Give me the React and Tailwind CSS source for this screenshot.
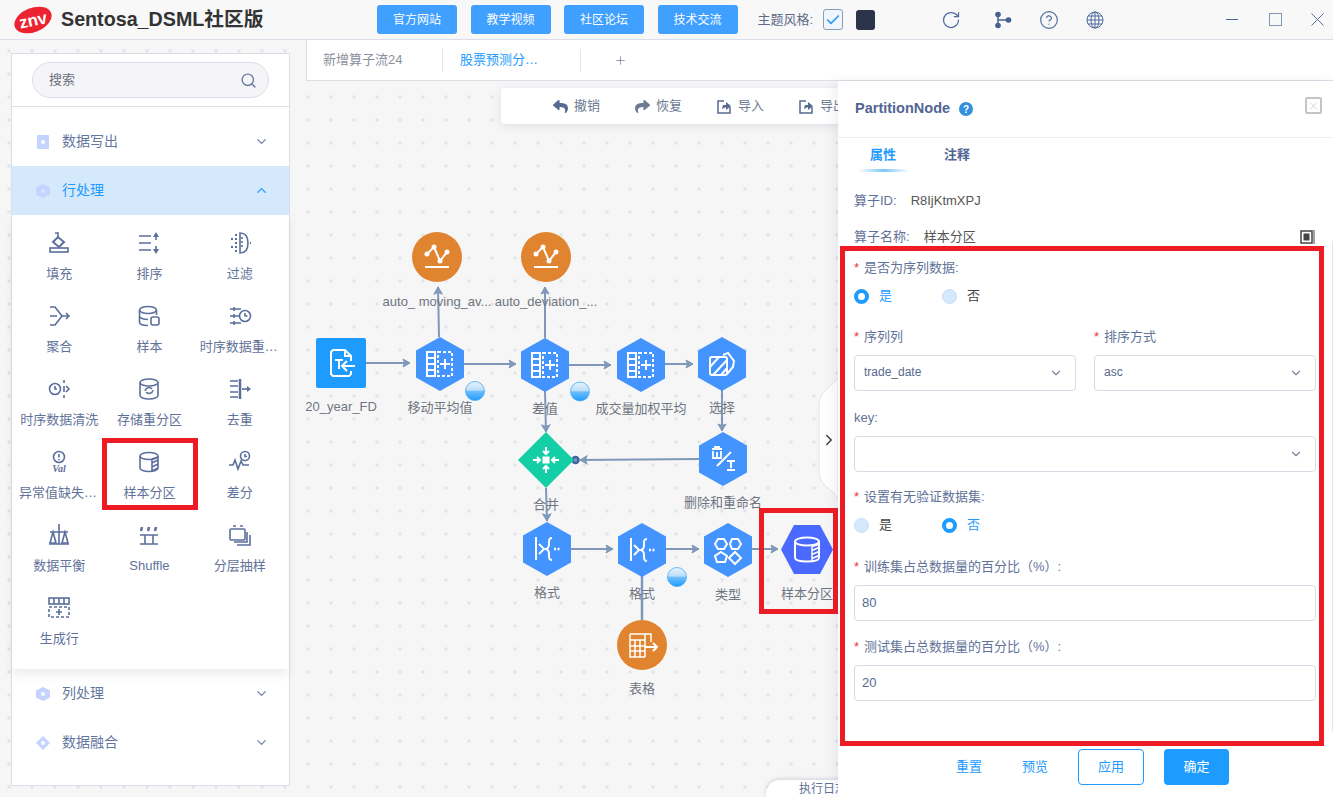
import { ChevronDown, ChevronUp, ChevronRight, Search, RotateCw, CircleHelp, Check, Plus, X } from 'lucide-react'
import { FaReply, FaShare } from 'react-icons/fa'

const stroke = { fill: 'none', stroke: 'currentColor', strokeWidth: 1.6 }

// sidebar operator icons, 24 box
const sideIcons = {
  fill: (
    <>
      <rect x="3" y="17" width="18" height="4" {...stroke} />
      <path d="M6 11l5-5 6 5-5 5z" {...stroke} strokeWidth="2" />
      <path d="M8 2h3v4" {...stroke} />
    </>
  ),
  sort: (
    <>
      <path d="M2 5h12M2 12h12M2 19h12" {...stroke} />
      <path d="M19 9V4M19 15v5" {...stroke} />
      <path d="M19 1l3 5h-6zM19 23l3-5h-6z" fill="currentColor" />
    </>
  ),
  filter: (
    <>
      <path d="M12 2c6 0 8 5 8 10s-2 10-8 10z" {...stroke} />
      <path d="M14 6v12" {...stroke} strokeDasharray="2 2" />
      <path d="M3 8h2M3 16h2M7 4h2M7 8h2M7 12h2M7 16h2M7 20h2M22 12h1" stroke="currentColor" strokeWidth="2" />
    </>
  ),
  agg: (
    <>
      <path d="M3 3h5l7 9-7 9H3M3 12h7" {...stroke} />
      <path d="M15 12h7M19 9l3 3-3 3" {...stroke} />
    </>
  ),
  sample: (
    <>
      <ellipse cx="11" cy="6" rx="8.500" ry="3.500" {...stroke} />
      <path d="M2.500 6v12c0 2 3.500 3.500 8.500 3.500M19.500 6v5M2.500 12c0 2 4 3.500 8.500 3.500" {...stroke} />
      <rect x="14" y="13" width="8" height="8" rx="2" {...stroke} />
    </>
  ),
  resample: (
    <>
      <path d="M2 5h11M2 12h9M2 19h11" {...stroke} />
      <path d="M6 3v4M6 10v4M6 17v4" {...stroke} />
      <circle cx="17" cy="12" r="5.500" {...stroke} />
      <path d="M17 9v3h2.500" {...stroke} />
    </>
  ),
  clean: (
    <>
      <circle cx="8" cy="12" r="5.500" {...stroke} />
      <path d="M8 9v3h2" {...stroke} />
      <path d="M17 3v3M17 9v6M17 18v3M19 9l3 3-3 3" {...stroke} />
    </>
  ),
  repart: (
    <>
      <ellipse cx="12" cy="5.500" rx="9" ry="3.500" {...stroke} />
      <path d="M3 5.500v13c0 2 4 3.500 9 3.500s9-1.500 9-3.500v-13" {...stroke} />
      <path d="M8 14a4 4 0 0 1 7-2M16 13a4 4 0 0 1-7 2" {...stroke} />
    </>
  ),
  dedup: (
    <>
      <path d="M2 4h8M2 9h8M2 15h8M2 20h8" {...stroke} />
      <path d="M12 2v20" stroke="currentColor" strokeWidth="2.500" />
      <path d="M14 12h6" {...stroke} />
      <path d="M23 12l-4 3v-6z" fill="currentColor" />
    </>
  ),
  anomaly: (
    <>
      <circle cx="12" cy="7" r="5.500" {...stroke} />
      <path d="M12 4v3.500M12 9v1.200" {...stroke} />
      <text x="12" y="22" textAnchor="middle" fontSize="10" fontStyle="italic" fontWeight="700" fontFamily="Liberation Serif, serif" fill="currentColor">
        Val
      </text>
    </>
  ),
  partition: (
    <>
      <ellipse cx="12" cy="6" rx="9" ry="3.500" {...stroke} />
      <path d="M3 6v12c0 2 4 3.500 9 3.500s9-1.500 9-3.500V6" {...stroke} />
      <path d="M15 9l6-2M15 13l6-3M15 17l6-3M15 21l6-3M15 9v12" {...stroke} />
    </>
  ),
  diff: (
    <>
      <path d="M1 15h4l2-5 3 9 3-8 2 4h6" {...stroke} />
      <circle cx="17" cy="6" r="4.500" {...stroke} />
      <path d="M17 4v2.500h2" {...stroke} />
    </>
  ),
  balance: (
    <>
      <path d="M12 1v20M3 9h18M2 21h20" {...stroke} />
      <path d="M6 9l-3 11h6zM18 9l-3 11h6z" {...stroke} />
    </>
  ),
  shuffle: (
    <>
      <path d="M3 12h18M3 21h18M8 12v9M16 12v9" {...stroke} />
      <path d="M5 4l-1 4M12 4l-1 4M19 4l-1 4" stroke="currentColor" strokeWidth="2.500" />
    </>
  ),
  strat: (
    <>
      <path d="M5 3h3M12 3h3" {...stroke} />
      <rect x="2" y="6" width="15" height="11" rx="1" {...stroke} />
      <path d="M19 9v10H6M22 12v10H9" {...stroke} />
    </>
  ),
  genrow: (
    <>
      <rect x="2" y="2" width="20" height="6" {...stroke} />
      <path d="M7 2v6M12 2v6M17 2v6" {...stroke} />
      <rect x="2" y="11" width="20" height="10" {...stroke} strokeDasharray="3 2" />
      <path d="M12 13v6M9 16h6" {...stroke} />
    </>
  ),
}

const operators = [
  ['填充', 'fill'],
  ['排序', 'sort'],
  ['过滤', 'filter'],
  ['聚合', 'agg'],
  ['样本', 'sample'],
  ['时序数据重采样', 'resample'],
  ['时序数据清洗', 'clean'],
  ['存储重分区', 'repart'],
  ['去重', 'dedup'],
  ['异常值缺失值处理', 'anomaly'],
  ['样本分区', 'partition', true],
  ['差分', 'diff'],
  ['数据平衡', 'balance'],
  ['Shuffle', 'shuffle'],
  ['分层抽样', 'strat'],
  ['生成行', 'genrow'],
]

const wht = { fill: 'none', stroke: '#fff', strokeWidth: 2 }

// white glyphs inside canvas nodes, drawn around 0,0
const nodeGlyphs = {
  colPlus: (
    <>
      <rect x="-13" y="-12" width="8" height="24" {...wht} />
      <path d="M-13-6h8M-13 0h8M-13 6h8" {...wht} />
      <rect x="-2" y="-12" width="14" height="24" {...wht} strokeDasharray="3 2" />
      <path d="M5-5V5M0 0h10" {...wht} />
    </>
  ),
  select: (
    <>
      <rect x="-12" y="-7" width="17" height="18" rx="2" {...wht} />
      <path d="M-12 3l9-10M-9 11L5-4M-1 11l6-7" {...wht} />
      <path d="M1-9l5-2 6 8-1 6-6 7" {...wht} />
    </>
  ),
  trashT: (
    <>
      <path d="M-11-10h10M-8-10v-2h4v2M-10-8v7h8v-7M-6-7v5" {...wht} strokeWidth="1.800" />
      <path d="M-6 7L8-7" {...wht} />
      <path d="M4 2h8M8 2v7M4 11h8" {...wht} />
    </>
  ),
  merge: (
    <>
      <rect x="-3.500" y="-3.500" width="7" height="7" fill="#fff" />
      <path d="M0-13v6M-3-9l3 3 3-3M0 13V7M-3 9l3-3 3 3M-13 0h6M-9-3l3 3-3 3M13 0H7M9-3L6 0l3 3" {...wht} />
    </>
  ),
  format: (
    <>
      <path d="M-11-12v23" {...wht} />
      <path d="M-8-5l5 5-5 5" {...wht} />
      <path d="M5-11c-3 0-3 2-3 5s0 5-3 6c3 1 3 3 3 6s0 5 3 5" {...wht} />
      <path d="M7 0h2M10.500 0h2" {...wht} strokeWidth="2.500" />
    </>
  ),
  shapes: (
    <>
      <path d="M-10-11h6l3 5-3 5h-6l-3-5z" {...wht} />
      <path d="M4-11h6l3 5-3 5H4L2-6z" {...wht} />
      <path d="M-7 2l6 4-2 6h-8l-2-6z" {...wht} />
      <path d="M7 2l6 6-6 6-6-6z" {...wht} />
    </>
  ),
  cyl: (
    <>
      <ellipse cx="0" cy="-8" rx="12" ry="4" {...wht} />
      <path d="M-12-8V8c0 2.500 5 4 12 4s12-1.500 12-4V-8" {...wht} />
      <path d="M5-3l7-2M5 1l7-3M5 5l7-3M5 9l7-3M5-3v14" {...wht} strokeWidth="1.500" />
    </>
  ),
  source: (
    <>
      <path d="M10-2v-5l-6-6H-8l-2 2v22l2 2H8l2-2V8" {...wht} />
      <path d="M4-12v5h6" {...wht} />
      <path d="M-6-3h8M-2-3V6" {...wht} />
      <path d="M14 3H1M6-2L1 3l5 5" {...wht} />
    </>
  ),
  chart: (
    <>
      <path d="M-10-3L-3-10 3 4 10-5" {...wht} />
      <circle cx="-10" cy="-3" r="2.500" fill="#fff" />
      <circle cx="-3" cy="-10" r="2.500" fill="#fff" />
      <circle cx="3" cy="4" r="2.500" fill="#fff" />
      <circle cx="10" cy="-5" r="2.500" fill="#fff" />
      <path d="M-12 10h24" {...wht} />
    </>
  ),
  table: (
    <>
      <path d="M-12-11h21v8M-12-11v23h15M-12-5H3M-12 1H3M-12 6H3M-7-5v17M-2-5v17M3-11v23" {...wht} strokeWidth="1.500" />
      <path d="M3 2h12M11-2l4 4-4 4" {...wht} />
    </>
  ),
}

const shapes = {
  hex: { w: 48, h: 54, draw: <polygon points="0,-27 24,-13.500 24,13.500 0,27 -24,13.500 -24,-13.500" fill="#4394ff" /> },
  hexH: { w: 52, h: 49, draw: <polygon points="-13,-24.500 13,-24.500 26,0 13,24.500 -13,24.500 -26,0" fill="#4a69ff" /> },
  diamond: { w: 56, h: 56, draw: <polygon points="0,-28 28,0 0,28 -28,0" fill="#14cfa6" /> },
  circle: { w: 50, h: 50, draw: <circle r="25" fill="#e0842f" /> },
  square: { w: 50, h: 50, draw: <rect x="-25" y="-25" width="50" height="50" rx="2" fill="#1e9bff" /> },
}

const nodes = [
  { x: 341, y: 363, shape: 'square', glyph: 'source', label: '20_year_FD', ly: 407 },
  { x: 440, y: 363.500, shape: 'hex', glyph: 'colPlus', label: '移动平均值', ly: 408 },
  { x: 545, y: 364.500, shape: 'hex', glyph: 'colPlus', label: '差值', ly: 409 },
  { x: 641, y: 364.500, shape: 'hex', glyph: 'colPlus', label: '成交量加权平均', ly: 409 },
  { x: 722, y: 363.500, shape: 'hex', glyph: 'select', label: '选择', ly: 408 },
  { x: 723, y: 459, shape: 'hex', glyph: 'trashT', label: '删除和重命名', ly: 503 },
  { x: 546, y: 460, shape: 'diamond', glyph: 'merge', label: '合并', ly: 505 },
  { x: 547, y: 549, shape: 'hex', glyph: 'format', label: '格式', ly: 593 },
  { x: 642, y: 549.500, shape: 'hex', glyph: 'format', label: '格式', ly: 594 },
  { x: 728, y: 550, shape: 'hex', glyph: 'shapes', label: '类型', ly: 595 },
  { x: 807, y: 549, shape: 'hexH', glyph: 'cyl', label: '样本分区', ly: 594 },
  { x: 642, y: 645, shape: 'circle', glyph: 'table', label: '表格', ly: 689 },
  { x: 437, y: 257, shape: 'circle', glyph: 'chart', label: 'auto_ moving_av...', ly: 302 },
  { x: 546, y: 257, shape: 'circle', glyph: 'chart', label: 'auto_deviation_...', ly: 302 },
]

const edges = [
  [366, 363, 410, 363],
  [439, 337, 438, 287],
  [464, 364, 516, 364],
  [545, 338, 545, 287],
  [569, 365, 611, 365],
  [665, 364, 693, 364],
  [722, 390, 722, 431],
  [545, 391, 546, 432],
  [699, 459, 580, 460],
  [546, 488, 547, 521],
  [571, 549, 613, 549],
  [666, 549, 699, 549],
  [752, 549, 778, 549],
]

const badges = [
  [475, 391],
  [580, 391.500],
  [677, 577],
]

const Edge = ({ from }) => {
  const [x1, y1, x2, y2] = from
  const a = (Math.atan2(y2 - y1, x2 - x1) * 180) / Math.PI
  return (
    <g>
      <line x1={x1} y1={y1} x2={x2} y2={y2} stroke="#7f98b9" strokeWidth="2" />
      <path d="M0 0l-7-4 1.500 4-1.500 4z" fill="#7f98b9" stroke="#7f98b9" transform={`translate(${x2} ${y2}) rotate(${a})`} />
    </g>
  )
}

const FlowNode = ({ node }) => {
  const s = shapes[node.shape]
  return (
    <>
      <svg
        className="absolute"
        style={{ left: node.x - 306 - s.w / 2, top: node.y - 81 - s.h / 2 }}
        width={s.w}
        height={s.h}
        viewBox={`${-s.w / 2} ${-s.h / 2} ${s.w} ${s.h}`}
      >
        {s.draw}
        {nodeGlyphs[node.glyph]}
      </svg>
      <span
        className="absolute -translate-x-1/2 -translate-y-1/2 whitespace-nowrap text-[13px] text-[#6f7580]"
        style={{ left: node.x - 306, top: node.ly - 81 }}
      >
        {node.label}
      </span>
    </>
  )
}

const Req = () => <span className="mr-[5px] text-[#f0323c]">*</span>

const Label = ({ children, req = true, className = '' }) => (
  <div className={`flex h-5 items-center text-[13px] text-[#5f7299] ${className}`}>
    {req && <Req />}
    {children}
  </div>
)

const Radio = ({ on, text }) => (
  <div className="flex w-[88px] items-center">
    <span
      className={
        on
          ? 'h-[15px] w-[15px] rounded-full border-[4px] border-[#1e9bff] bg-white'
          : 'h-[15px] w-[15px] rounded-full border border-[#c9dcf5] bg-[#d5e9fd]'
      }
    />
    <span className={`ml-[10px] text-[13px] ${on ? 'text-[#1e9bff]' : 'text-[#444]'}`}>{text}</span>
  </div>
)

const Select = ({ value }) => (
  <div className="flex h-9 items-center justify-between rounded-[4px] border border-[#d8dbe6] pl-[9px] pr-[12px] text-[12px] text-[#56698f]">
    <span className="-mt-[2px]">{value}</span>
    <ChevronDown size={14} className="text-[#7a869c]" />
  </div>
)

const Field = ({ value }) => (
  <div className="flex h-9 items-center rounded-[4px] border border-[#d8dbe6] pl-[7px] text-[13px] text-[#56698f]">{value}</div>
)

const Accordion = ({ title, shape }) => (
  <div className="flex h-[49px] items-center pl-[24px] pr-[20px] text-[14px] text-[#64779f]">
    <svg width="14" height="16" viewBox="0 0 14 16" className="mr-[12px]">
      {shape === 'rect' && <rect x="1" y="1" width="12" height="14" rx="1" fill="#c5d3ff" />}
      {shape === 'hex' && <polygon points="7,1 14,4.500 14,11.500 7,15 0,11.500 0,4.500" fill="#c5d3ff" />}
      {shape === 'diamond' && <polygon points="7,1 14,8 7,15 0,8" fill="#c5d3ff" />}
      <circle cx="7" cy="8" r="2" fill="#fff" />
    </svg>
    <span className="flex-1">{title}</span>
    <ChevronDown size={15} className="text-[#7282ab]" />
  </div>
)

const Sidebar = () => (
  <aside className="flex w-[279px] flex-1 flex-col border border-[#dcdde8] bg-white">
    <div className="h-[53px] border-b border-[#dcdde8] px-[20px] pt-[8px]">
      <div className="flex h-9 items-center justify-between rounded-full border border-[#dcdde8] bg-[#f5f5f7] pl-[16px] pr-[11px] text-[13px] text-[#6c7280]">
        <span>搜索</span>
        <Search size={17} className="text-[#6b7da6]" />
      </div>
    </div>
    <div className="mt-[10px]">
      <Accordion title="数据写出" shape="rect" />
    </div>
    <div className="flex h-[49px] items-center bg-[#d5e9fd] pl-[24px] pr-[20px] text-[14px] text-[#1e9bff]">
      <svg width="14" height="16" viewBox="0 0 14 16" className="mr-[12px]">
        <polygon points="7,1 14,4.500 14,11.500 7,15 0,11.500 0,4.500" fill="#c5d3ff" />
        <circle cx="7" cy="8" r="2" fill="#d5e9fd" />
      </svg>
      <span className="flex-1">行处理</span>
      <ChevronUp size={15} />
    </div>
    <div className="relative z-10 grid grid-cols-3 gap-y-[20px] bg-white pb-[20px] pl-[2px] pr-[4px] pt-4 shadow-[0_6px_10px_rgba(0,0,0,0.07)]">
      {operators.map(([name, icon, marked]) => (
        <div key={name} className="relative flex flex-col items-center px-[5px] text-[#5f7299]">
          <svg width="24" height="24" viewBox="0 0 24 24" className="text-[#5b6f9c]">
            {sideIcons[icon]}
          </svg>
          <span className="mt-[9px] h-5 w-full truncate text-center text-[13px] leading-5">{name}</span>
          {marked && <div className="absolute -bottom-[7px] -left-[2px] -right-[3px] -top-[12px] border-[5px] border-[#ed1c24]" />}
        </div>
      ))}
    </div>
    <Accordion title="列处理" shape="hex" />
    <Accordion title="数据融合" shape="diamond" />
  </aside>
)

const Header = () => (
  <header className="flex h-10 shrink-0 items-center border-b border-[#dcdde8] bg-[#f8f8f9]">
    <svg width="40" height="30" viewBox="0 0 40 30" className="ml-[13px]">
      <ellipse cx="20" cy="15" rx="19.500" ry="12" fill="#ed2230" transform="rotate(-22 20 15)" />
      <text x="20" y="21" textAnchor="middle" fontSize="17" fontWeight="700" fill="#fff" fontFamily="Liberation Sans, sans-serif" transform="rotate(-12 20 15)">
        znv
      </text>
    </svg>
    <span className="ml-2 w-[316px] text-[19.700px] font-bold text-[#333]">Sentosa_DSML社区版</span>
    <div className="flex gap-[13.500px]">
      {['官方网站', '教学视频', '社区论坛', '技术交流'].map((t) => (
        <div key={t} className="flex h-[29px] w-20 items-center justify-center rounded-[3px] bg-[#40a0ff] text-[12px] text-white">
          {t}
        </div>
      ))}
    </div>
    <span className="ml-5 text-[13px] text-[#5f6b85]">主题风格:</span>
    <div className="ml-[10px] flex h-[21px] w-[20px] items-center justify-center rounded-[3px] border border-[#8d9cb8] bg-[#f0f6fd]">
      <Check size={16} strokeWidth={2.5} className="text-[#2e9bf5]" />
    </div>
    <div className="ml-[13px] h-5 w-[19px] rounded-[3px] bg-[#2a3347]" />
    <RotateCw size={20} strokeWidth={1.5} className="ml-[66px] text-[#4f6a9c]" />
    <svg width="18" height="18" viewBox="0 0 18 18" className="ml-[33px] text-[#46608f]">
      <circle cx="4" cy="3.500" r="2.800" fill="currentColor" />
      <circle cx="4" cy="14.500" r="2.800" fill="currentColor" />
      <circle cx="14.500" cy="9" r="2.800" fill="currentColor" />
      <path d="M4 3.500V14.500M4 9h10.500" stroke="currentColor" strokeWidth="1.500" />
    </svg>
    <CircleHelp size={20} strokeWidth={1.4} className="ml-[27px] text-[#4f6a9c]" />
    <svg width="18" height="18" viewBox="0 0 18 18" fill="none" stroke="#4f6a9c" strokeWidth="1" className="ml-[27px]">
      <circle cx="9" cy="9" r="8" />
      <ellipse cx="9" cy="9" rx="4" ry="8" />
      <path d="M9 1v16M1 9h16M2 5h14M2 13h14" />
    </svg>
    <div className="ml-[122px] h-px w-3 bg-[#4f6a9c]" />
    <div className="ml-[31px] h-[13px] w-[13px] border border-[#7f96bb]" />
    <X size={23} strokeWidth={1} className="ml-[24px] text-[#4f6a9c]" />
  </header>
)

const Tabs = () => (
  <div className="flex h-[41px] shrink-0 items-center border-b border-l border-[#dcdfe8] bg-white text-[13px]">
    <span className="ml-4 w-[119px] text-[#8a8f9c]">新增算子流24</span>
    <span className="h-[23px] w-px bg-[#e4e6ee]" />
    <span className="ml-[17px] w-[120px] text-[#1e9bff]">股票预测分…</span>
    <span className="h-[23px] w-px bg-[#e4e6ee]" />
    <Plus size={13} strokeWidth={1.5} className="ml-[33px] text-[#7a869c]" />
  </div>
)

const ToolBtn = ({ icon, text, className = '' }) => (
  <div className={`flex items-center gap-[6px] text-[13px] text-[#6d7a94] ${className}`}>
    {icon}
    <span className="whitespace-nowrap">{text}</span>
  </div>
)

const BoxArrow = () => (
  <svg width="15" height="15" viewBox="0 0 15 15" fill="none" stroke="#56698f" strokeWidth="1.500">
    <path d="M7 2H1v12h12V8" />
    <path d="M5 10l1-4 3 0V3l5 4-5 4V8z" fill="#56698f" stroke="none" />
  </svg>
)

const Canvas = () => (
  <div className="relative flex-1 overflow-hidden">
    <div className="absolute left-[195px] top-[7px] flex h-9 w-[420px] items-center rounded-[4px] bg-white pl-[52px] shadow-[0_2px_10px_rgba(60,70,100,0.12)]">
      <ToolBtn icon={<FaReply size={15} className="text-[#56698f]" />} text="撤销" />
      <ToolBtn icon={<FaShare size={15} className="text-[#6d7a94]" />} text="恢复" className="ml-[35px]" />
      <ToolBtn icon={<BoxArrow />} text="导入" className="ml-[35px]" />
      <ToolBtn icon={<BoxArrow />} text="导出" className="ml-[35px]" />
    </div>

    <svg className="absolute inset-0" width="532" height="716" viewBox="306 81 532 716">
      {edges.map((e) => (
        <Edge key={e.join('-')} from={e} />
      ))}
      <path d="M642 576v44" stroke="#7f98b9" strokeWidth="2.500" />
      <circle cx="575.500" cy="460" r="3" fill="#7f98b9" stroke="#3d689f" strokeWidth="2.500" />
      <defs>
        <linearGradient id="water" x1="0" y1="0" x2="0" y2="1">
          <stop offset="0" stopColor="#e6f3fd" />
          <stop offset="0.45" stopColor="#bcdffa" />
          <stop offset="0.52" stopColor="#6dbefc" />
          <stop offset="1" stopColor="#1e9bff" />
        </linearGradient>
      </defs>
      {badges.map(([x, y]) => (
        <circle key={x} cx={x} cy={y} r="9.500" fill="url(#water)" stroke="#45aaf8" strokeWidth="0.800" />
      ))}
    </svg>

    {nodes.map((n) => (
      <FlowNode key={`${n.x}-${n.y}`} node={n} />
    ))}

    <div className="absolute left-[453px] top-[427px] h-[106px] w-[79px] border-[5px] border-[#ed1c24]" />

    <svg className="absolute left-[510px] top-[294px]" width="22" height="126" viewBox="0 0 22 126">
      <path d="M22 2C18 12 3 14 3 30v66c0 16 15 18 19 28z" fill="#fff" stroke="#e2e4ee" />
    </svg>
    <ChevronRight size={18} strokeWidth={2} className="absolute left-[514px] top-[350px] text-[#3c3f46]" />

    <div className="absolute bottom-0 left-[460px] flex h-[17px] w-[84px] items-center rounded-tl-[14px] bg-white pl-[33px] text-[12px] whitespace-nowrap text-[#5f7299] shadow-[0_-1px_4px_rgba(60,70,100,0.2)]">
      执行日志
    </div>
  </div>
)

const Panel = () => (
  <section className="relative z-10 flex w-[495px] shrink-0 flex-col bg-white shadow-[-4px_0_10px_rgba(60,70,100,0.08)]">
    <div className="flex h-[57px] shrink-0 items-center border-b border-[#eceef3] pl-[17px] pr-[11px]">
      <span className="text-[14.500px] font-bold text-[#4f6593]">PartitionNode</span>
      <span className="ml-[9px] flex h-[14px] w-[14px] items-center justify-center rounded-full bg-[#3390dc] text-[10px] font-bold text-white">?</span>
      <span className="mb-[7px] ml-auto flex h-[17px] w-[17px] items-center justify-center rounded-[2px] border-2 border-[#c4c4c4]">
        <X size={14} strokeWidth={1.5} className="text-[#dcc4c8]" />
      </span>
    </div>
    <div className="flex h-[34px] shrink-0 items-center gap-[48px] pl-[32px] text-[13px] font-bold">
      <span className="relative text-[#1e9bff]">
        属性
        <span className="absolute -left-3 -right-[13px] top-[24px] h-[3px] rounded-full bg-gradient-to-r from-transparent via-[#7cc6fb] to-transparent" />
      </span>
      <span className="text-[#4f6593]">注释</span>
    </div>
    <div className="flex flex-1 flex-col pl-4 pr-[17px]">
      <div className="mt-[19px] flex h-5 items-center text-[13px] text-[#5f7299]">
        算子ID:
        <span className="ml-[14px] text-[#555]">R8IjKtmXPJ</span>
      </div>
      <div className="mt-4 flex h-5 items-center text-[13px] text-[#5f7299]">
        算子名称:
        <span className="ml-[14px] text-[#555]">样本分区</span>
        <svg width="16" height="16" viewBox="0 0 16 16" className="ml-auto" fill="none" stroke="#444">
          <rect x="1" y="2" width="11" height="12" strokeWidth="1.500" />
          <rect x="3.500" y="4.500" width="6" height="7" fill="#444" stroke="none" />
          <path d="M14 1v14" />
        </svg>
      </div>
      <Label className="mt-[11px]">是否为序列数据:</Label>
      <div className="mt-2 flex h-5">
        <Radio on text="是" />
        <Radio text="否" />
      </div>
      <div className="mt-[21px] grid grid-cols-2 gap-x-[18px]">
        <div>
          <Label>序列列</Label>
          <div className="mt-2">
            <Select value="trade_date" />
          </div>
        </div>
        <div>
          <Label>排序方式</Label>
          <div className="mt-2">
            <Select value="asc" />
          </div>
        </div>
      </div>
      <Label req={false} className="mt-[17px]">key:</Label>
      <div className="mt-2">
        <Select value="" />
      </div>
      <Label className="mt-[15px]">设置有无验证数据集:</Label>
      <div className="mt-2 flex h-5">
        <Radio text="是" />
        <Radio on text="否" />
      </div>
      <Label className="mt-[22px]">训练集占总数据量的百分比（%）:</Label>
      <div className="mt-2">
        <Field value="80" />
      </div>
      <Label className="mt-4">测试集占总数据量的百分比（%）:</Label>
      <div className="mt-2">
        <Field value="20" />
      </div>
      <div className="mt-[48px] flex h-9 items-center pl-[102px] text-[13px] text-[#1e9bff]">
        <span>重置</span>
        <span className="ml-[40px]">预览</span>
        <span className="ml-[30px] flex h-9 w-[66px] items-center justify-center rounded-[4px] border border-[#1e9bff]">应用</span>
        <span className="ml-5 flex h-9 w-[65px] items-center justify-center rounded-[4px] bg-[#1e9bff] text-white">确定</span>
      </div>
    </div>
    <div className="absolute left-[2px] top-[165px] h-[500px] w-[484px] border-[5px] border-[#ed1c24]" />
    <div className="absolute right-0 top-[160px] h-[490px] w-px bg-[#e4e5ea]" />
  </section>
)

export default function App() {
  return (
    <div className="flex h-[797px] w-[1333px] flex-col overflow-hidden bg-[#f6f6f7] font-['Liberation_Sans','Noto_Sans_CJK_SC',sans-serif]">
      <Header />
      <div className="flex min-h-0 flex-1 bg-[radial-gradient(circle,#e2e3e8_1.5px,transparent_1.7px)] bg-[length:23px_23px] bg-[position:-2.5px_-0.5px]">
        <div className="flex w-[306px] shrink-0 flex-col pb-[11px] pl-[11px] pt-[13px]">
          <Sidebar />
        </div>
        <div className="flex min-w-0 flex-1 flex-col">
          <Tabs />
          <div className="flex min-h-0 flex-1">
            <Canvas />
            <Panel />
          </div>
        </div>
      </div>
    </div>
  )
}
